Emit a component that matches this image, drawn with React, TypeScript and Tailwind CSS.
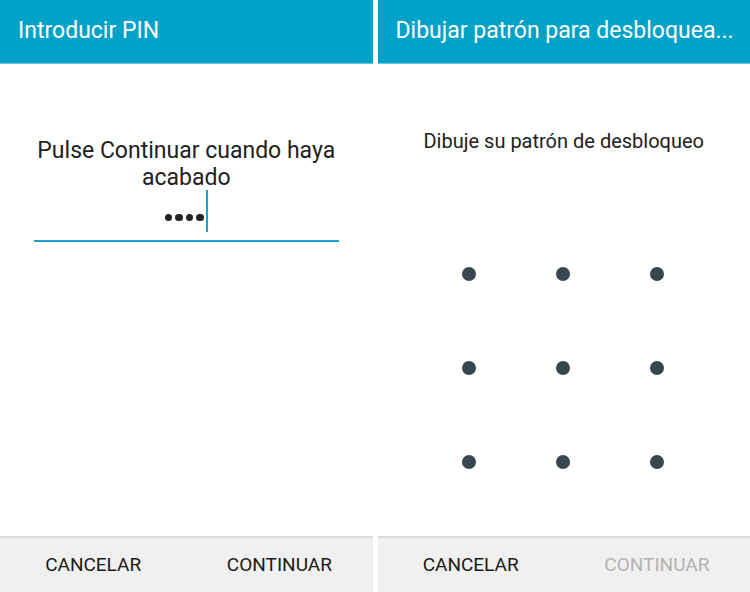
import React from "react";

const font = { fontFamily: "Roboto, 'Noto Sans', sans-serif" };

function Header({ title }: { title: string }) {
  return (
    <div className="h-[64px] bg-[#00a2c7] border-b border-[#66c8df] flex items-center pl-[18px] pr-[16px]">
      <div className="text-white text-[23px] truncate">{title}</div>
    </div>
  );
}

function Footer({ canContinue }: { canContinue: boolean }) {
  return (
    <div className="h-[56px] bg-[#f0f0f0] border-t-2 border-[#d9d9d9] flex">
      <button className="flex-1 flex items-center justify-center text-[19px] text-[#1a1a1a]">
        CANCELAR
      </button>
      <button
        className={
          canContinue
            ? "flex-1 flex items-center justify-center text-[19px] text-[#1a1a1a]"
            : "flex-1 flex items-center justify-center text-[19px] text-[#b3b3b3]"
        }
      >
        CONTINUAR
      </button>
    </div>
  );
}

function PinPanel() {
  return (
    <div className="flex-1 flex flex-col bg-white">
      <Header title="Introducir PIN" />
      <div className="flex-1 px-[34px] pt-[73px]">
        <p className="text-center text-[23px] leading-[27px] text-[#212121]">
          Pulse Continuar cuando haya acabado
        </p>
        <div className="h-[51px] border-b-2 border-[#1ea2c8] flex items-end justify-center pb-[8px]">
          <div className="flex items-center gap-[3px] pb-[11px]">
            <span className="w-[7.5px] h-[7.5px] rounded-full bg-[#222]" />
            <span className="w-[7.5px] h-[7.5px] rounded-full bg-[#222]" />
            <span className="w-[7.5px] h-[7.5px] rounded-full bg-[#222]" />
            <span className="w-[7.5px] h-[7.5px] rounded-full bg-[#222]" />
          </div>
          <span className="w-[2px] h-[42px] bg-[#1ea2c8] ml-[2px]" />
        </div>
      </div>
      <Footer canContinue />
    </div>
  );
}

function PatternPanel() {
  const dots = Array.from({ length: 9 });
  return (
    <div className="flex-1 flex flex-col bg-white">
      <Header title="Dibujar patrón para desbloquea..." />
      <div className="flex-1 flex flex-col items-center pt-[64px]">
        <p className="text-[20px] leading-[27px] text-[#212121]">Dibuje su patrón de desbloqueo</p>
        <div className="grid grid-cols-[94px_94px_94px] grid-rows-[94px_94px_94px] mt-[72px] -ml-[2px]">
          {dots.map((_, i) => (
            <div key={i} className="flex items-center justify-center">
              <span className="w-[14px] h-[14px] rounded-full bg-[#37474f]" />
            </div>
          ))}
        </div>
      </div>
      <Footer canContinue={false} />
    </div>
  );
}

export default function App() {
  return (
    <div className="w-[750px] h-[592px] flex gap-[5px] bg-white overflow-hidden" style={font}>
      <PinPanel />
      <PatternPanel />
    </div>
  );
}
